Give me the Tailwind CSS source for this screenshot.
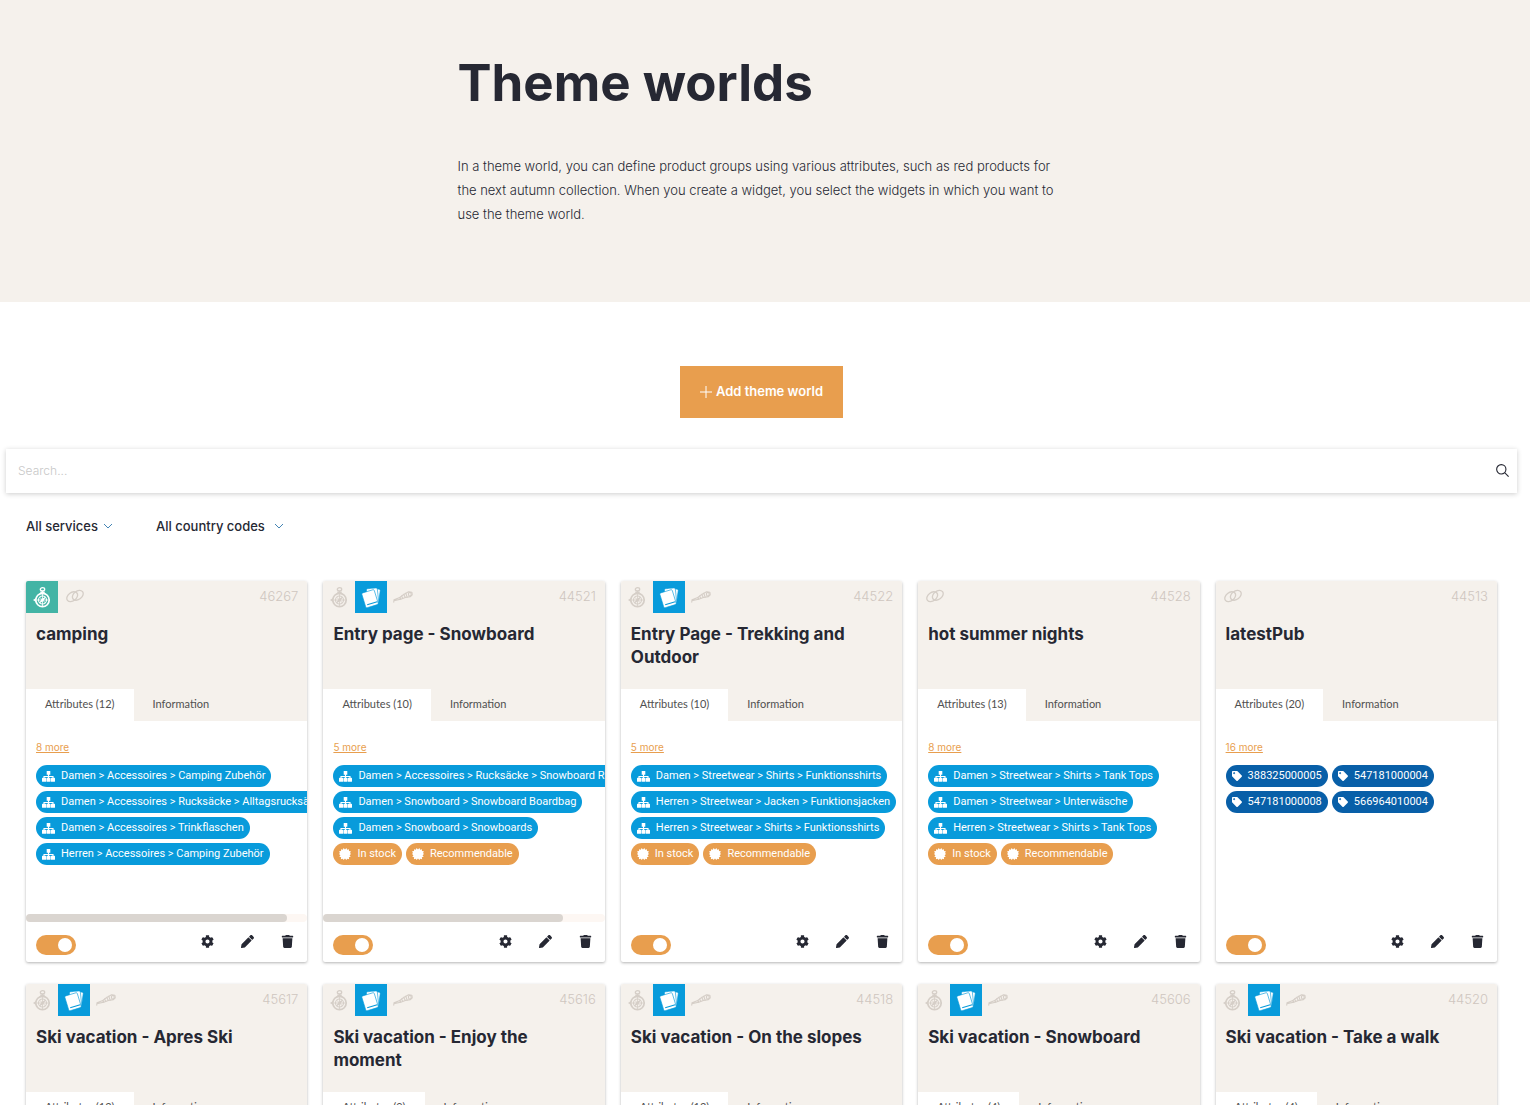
<!DOCTYPE html>
<html lang="en">
<head>
    <meta charset="UTF-8">
    <meta name="viewport" content="width=device-width, initial-scale=1.0">
    <title>Theme worlds</title>
    <script src="https://cdn.jsdelivr.net/npm/@tailwindcss/browser@4"></script>
</head>
<body class="bg-white font-['Inter',sans-serif] text-[#262833]">
    <!-- Icon sprite -->
    <svg class="hidden" aria-hidden="true">
        <symbol id="i-compass" viewBox="0 0 18 21">
            <g fill="none" stroke="currentColor">
                <circle cx="9.500" cy="13" r="6.700" stroke-width="1.700"/>
                <circle cx="9.500" cy="13" r="4" stroke-width="1.100"/>
                <path d="M9.500 7v12M3.500 13h12M6.500 10l6 6M12.500 10l-6 6" stroke-width=".8"/>
                <ellipse cx="9.500" cy="2.300" rx="2.200" ry="1.600" stroke-width="1.300"/>
                <path d="M9.500 4v2.500M7.300 5.300h4.400" stroke-width="1.500"/>
            </g>
            <path d="M0 13l3-2v4zM12.700 9.800l-2.200 4.200-4.200 2.200 2.200-4.200z" fill="currentColor"/>
        </symbol>
        <symbol id="i-cards" viewBox="0 0 20 21">
            <g fill="currentColor" stroke="#089bdb" stroke-width=".6">
                <rect x="8" y="1.500" width="10.500" height="14" rx="1.200" transform="rotate(8 13.200 8.500)"/>
                <rect x="6" y="1.300" width="11" height="14.500" rx="1.200" transform="rotate(-6 11.500 8.500)"/>
                <rect x="2.500" y="4" width="13" height="15.500" rx="1.200" transform="rotate(-17 9 11.700)"/>
            </g>
            <path d="M6.200 17.700l10-3" fill="none" stroke="#089bdb" stroke-width="1.200"/>
        </symbol>
        <symbol id="i-spyglass" viewBox="0 0 22 13">
            <g fill="none" stroke="currentColor" stroke-width="1.200" stroke-linejoin="round" stroke-linecap="round">
                <path d="M1 12l.3-2.600L7.500 7l1 2-6.200 1.200-1.200-.4"/>
                <path d="M7.500 7l4.300-3.300 1.700 3.300-5 2zM11.800 3.700L17 .900l3.600.4.400 2.800-2 2-5.500.9z"/>
                <path d="M9.500 5.500l1.200 2.600M14 2.500l1.500 4.100"/>
                <ellipse cx="18.400" cy="3.500" rx="1.500" ry="2"/>
            </g>
        </symbol>
        <symbol id="i-link" viewBox="0 0 18 14">
            <g fill="none" stroke="currentColor" stroke-width="1.300">
                <ellipse cx="6.200" cy="7.700" rx="6" ry="4.200" transform="rotate(-38 6.200 7.700)"/>
                <ellipse cx="11.800" cy="6.300" rx="6" ry="4.200" transform="rotate(-38 11.800 6.300)"/>
            </g>
        </symbol>
        <symbol id="i-sitemap" viewBox="0 0 13 11">
            <path d="M6.500 3v4M2 8V5.500h9V8" fill="none" stroke="currentColor" stroke-width="1.100"/>
            <path d="M4.700 0h3.600v3.800H4.700zM.6 6.800h2.900a.6.6 0 0 1 .6.600v2.800a.6.6 0 0 1-.6.600H.6a.6.6 0 0 1-.6-.6V7.400a.6.6 0 0 1 .6-.6zM5.100 6.800h2.800a.6.6 0 0 1 .6.600v2.800a.6.6 0 0 1-.6.600H5.100a.6.6 0 0 1-.6-.6V7.400a.6.6 0 0 1 .6-.6zM9.500 6.800h2.900a.6.6 0 0 1 .6.600v2.800a.6.6 0 0 1-.6.600H9.500a.6.6 0 0 1-.6-.6V7.400a.6.6 0 0 1 .6-.6z" fill="currentColor"/>
        </symbol>
        <symbol id="i-badge" viewBox="0 0 24 24">
            <path fill="currentColor" d="M12 2.800L14.800 0l1.500 3.600L20 2.300l-.1 3.900 3.900.4-1.700 3.500L24 12l-2.900 2.400 2.300 3.100-3.700 1 .6 3.900-3.700-1L14.800 24 12 21.200 9.200 24l-1.800-2.600-3.700 1 .6-3.900-3.700-1 2.300-3.100L0 12l1.900-1.900L.2 6.600l3.900-.4L4 2.300l3.700 1.300L9.200 0z"/>
        </symbol>
        <symbol id="i-tag" viewBox="0 0 512 512">
            <path fill="currentColor" d="M0 252.100V48C0 21.500 21.500 0 48 0h204.100a48 48 0 0 1 33.900 14.100l211.900 211.900c18.700 18.700 18.700 49.100 0 67.900L293.800 497.900c-18.700 18.700-49.100 18.700-67.900 0L14.100 286.100A48 48 0 0 1 0 252.100zM112 64c-26.500 0-48 21.500-48 48s21.500 48 48 48 48-21.500 48-48-21.500-48-48-48z"/>
        </symbol>
        <symbol id="i-gear" viewBox="0 0 512 512">
            <path fill="currentColor" d="M487.400 315.700l-42.600-24.600c4.300-23.200 4.300-47 0-70.200l42.600-24.600c4.900-2.800 7.100-8.600 5.500-14-11.100-35.600-30-67.800-54.700-94.600-3.800-4.100-10-5.100-14.800-2.300L380.800 110c-17.900-15.400-38.500-27.300-60.800-35.100V25.800c0-5.600-3.900-10.500-9.400-11.700-36.700-8.200-74.300-7.800-109.200 0-5.500 1.200-9.400 6.100-9.400 11.700V75c-22.200 7.900-42.800 19.800-60.800 35.100L88.700 85.500c-4.900-2.800-11-1.900-14.800 2.300-24.700 26.700-43.600 58.900-54.700 94.600-1.700 5.400.6 11.200 5.500 14L67.300 221c-4.300 23.200-4.300 47 0 70.200l-42.600 24.600c-4.900 2.800-7.100 8.600-5.500 14 11.100 35.600 30 67.800 54.700 94.600 3.800 4.100 10 5.100 14.800 2.300l42.600-24.600c17.900 15.400 38.500 27.300 60.800 35.100v49.200c0 5.600 3.900 10.500 9.400 11.700 36.700 8.200 74.300 7.800 109.200 0 5.500-1.200 9.400-6.100 9.400-11.700v-49.200c22.200-7.900 42.800-19.800 60.800-35.100l42.600 24.600c4.900 2.800 11 1.900 14.800-2.300 24.700-26.700 43.600-58.900 54.700-94.600 1.500-5.500-.7-11.300-5.600-14.100zM256 336c-44.100 0-80-35.900-80-80s35.900-80 80-80 80 35.900 80 80-35.900 80-80 80z"/>
        </symbol>
        <symbol id="i-pencil" viewBox="0 0 512 512">
            <path fill="currentColor" d="M497.900 142.100l-46.100 46.100c-4.700 4.700-12.300 4.700-17 0l-111-111c-4.700-4.700-4.700-12.300 0-17l46.100-46.100c18.700-18.700 49.100-18.700 67.900 0l60.100 60.100c18.800 18.700 18.800 49.100 0 67.900zM284.200 99.800L21.600 362.400.4 483.900c-2.900 16.400 11.400 30.600 27.800 27.800l121.500-21.300 262.600-262.600c4.700-4.700 4.700-12.300 0-17l-111-111c-4.800-4.700-12.400-4.700-17.100 0z"/>
        </symbol>
        <symbol id="i-trash" viewBox="0 0 448 512">
            <path fill="currentColor" d="M432 32H312l-9.400-18.700A24 24 0 0 0 281.100 0H166.800a23.700 23.700 0 0 0-21.400 13.300L136 32H16A16 16 0 0 0 0 48v32a16 16 0 0 0 16 16h416a16 16 0 0 0 16-16V48a16 16 0 0 0-16-16zM32 128l21.200 339a48 48 0 0 0 47.900 45h245.800a48 48 0 0 0 47.900-45L416 128z"/>
        </symbol>
    </svg>

    <header class="bg-[#f5f1ec] pr-[7px] pt-[50px] pb-[76px]">
        <div class="mx-auto max-w-[608px]">
            <h1 class="text-[51px] leading-[66px] font-bold">Theme worlds</h1>
            <p class="mt-[38px] text-[13px] leading-6 font-light">In a theme world, you can define product groups using various attributes, such as red products for the next autumn collection. When you create a widget, you select the widgets in which you want to use the theme world.</p>
        </div>
    </header>

    <main class="pt-16">
        <div class="flex justify-center pr-[7px]">
            <button type="button" class="flex h-[52px] items-center gap-1 bg-[#e89e4e] px-5 text-[13px] font-semibold text-white">
                <svg class="size-3" viewBox="0 0 12 12" fill="none" stroke="currentColor" aria-hidden="true"><path d="M6 0v12M0 6h12"/></svg>
                Add theme world
            </button>
        </div>

        <form class="mt-[31px] mr-[13px] ml-1.5 flex h-11 items-center bg-white shadow-[0_1px_5px_rgba(0,0,0,0.2)]">
            <input type="search" aria-label="Search" placeholder="Search..." class="h-full flex-1 px-3 pb-0.5 text-xs font-light outline-none placeholder:text-[#c8c8c8]">
            <button type="submit" aria-label="Start search" class="px-2 pb-0.5">
                <svg class="size-[13px]" viewBox="0 0 14 14" fill="none" stroke="currentColor" stroke-width="1.200" aria-hidden="true"><circle cx="5.700" cy="5.700" r="5"/><path d="M9.300 9.300l4.300 4.300"/></svg>
            </button>
        </form>

        <div class="mt-[23px] flex gap-11 pl-[26px] text-[13px] leading-5 font-medium">
            <div class="flex items-center gap-1.5">
                <select aria-label="Service" class="appearance-none"><option>All services</option></select>
                <svg class="h-1.5 w-2" viewBox="0 0 8 6" fill="none" stroke="#4384b4" aria-hidden="true"><path d="M0 1l4 4 4-4"/></svg>
            </div>
            <div class="flex items-center gap-2.5">
                <select aria-label="Country code" class="appearance-none"><option>All country codes</option></select>
                <svg class="h-1.5 w-2" viewBox="0 0 8 6" fill="none" stroke="#4384b4" aria-hidden="true"><path d="M0 1l4 4 4-4"/></svg>
            </div>
        </div>

        <section id="worlds" class="mt-[45px] grid grid-cols-5 gap-x-4 gap-y-[22px] pr-[33px] pb-8 pl-[26px]"></section>
    </main>

    <script>
        const slots = {
            compass: '<span class="flex size-8 items-center justify-center text-[#d5cec7]"><svg class="h-[21px] w-[18px]"><use href="#i-compass"/></svg></span>',
            compassOn: '<span class="flex size-8 items-center justify-center bg-[#43b4a5] text-white"><svg class="h-[21px] w-[18px]"><use href="#i-compass"/></svg></span>',
            cards: '<span class="flex size-8 items-center justify-center bg-[#089bdb] text-white"><svg class="h-[21px] w-5"><use href="#i-cards"/></svg></span>',
            spyglass: '<span class="flex size-8 items-center justify-center text-[#d5cec7]"><svg class="h-3 w-[22px]"><use href="#i-spyglass"/></svg></span>',
            link: '<span class="flex h-8 w-[34px] items-center justify-center pb-0.5 text-[#d5cec7]"><svg class="h-3.5 w-[18px]"><use href="#i-link"/></svg></span>'
        };
        const wizard = ['compass', 'cards', 'spyglass'];

        const chip = {
            path: text => `<li class="flex h-[22px] items-center gap-1.5 rounded-full bg-[#089bdb] px-1.5 whitespace-nowrap text-white"><svg class="h-[11px] w-[13px]"><use href="#i-sitemap"/></svg>${text.replaceAll('>', '&gt;')}</li>`,
            flag: text => `<li class="flex h-[22px] items-center gap-1.5 rounded-full bg-[#e89e4e] px-1.5 whitespace-nowrap text-white"><svg class="size-3"><use href="#i-badge"/></svg>${text}</li>`,
            tag: text => `<li class="flex h-[22px] items-center gap-1.5 rounded-full bg-[#085fa8] px-1.5 whitespace-nowrap text-white"><svg class="size-2.5"><use href="#i-tag"/></svg>${text}</li>`
        };
        const flags = [['flag', 'In stock'], ['flag', 'Recommendable']];

        const worlds = [
            { id: 46267, title: 'camping', count: 12, more: 8, icons: ['compassOn', 'link'], scroll: 261, rows: [
                [['path', 'Damen > Accessoires > Camping Zubehör']],
                [['path', 'Damen > Accessoires > Rucksäcke > Alltagsrucksäcke']],
                [['path', 'Damen > Accessoires > Trinkflaschen']],
                [['path', 'Herren > Accessoires > Camping Zubehör']]] },
            { id: 44521, title: 'Entry page - Snowboard', count: 10, more: 5, icons: wizard, scroll: 240, rows: [
                [['path', 'Damen > Accessoires > Rucksäcke > Snowboard Rucksäcke']],
                [['path', 'Damen > Snowboard > Snowboard Boardbag']],
                [['path', 'Damen > Snowboard > Snowboards']], flags] },
            { id: 44522, title: 'Entry Page - Trekking and Outdoor', count: 10, more: 5, icons: wizard, rows: [
                [['path', 'Damen > Streetwear > Shirts > Funktionsshirts']],
                [['path', 'Herren > Streetwear > Jacken > Funktionsjacken']],
                [['path', 'Herren > Streetwear > Shirts > Funktionsshirts']], flags] },
            { id: 44528, title: 'hot summer nights', count: 13, more: 8, icons: ['link'], rows: [
                [['path', 'Damen > Streetwear > Shirts > Tank Tops']],
                [['path', 'Damen > Streetwear > Unterwäsche']],
                [['path', 'Herren > Streetwear > Shirts > Tank Tops']], flags] },
            { id: 44513, title: 'latestPub', count: 20, more: 16, icons: ['link'], rows: [
                [['tag', '388325000005'], ['tag', '547181000004']],
                [['tag', '547181000008'], ['tag', '566964010004']]] },
            { id: 45617, title: 'Ski vacation - Apres Ski', count: 12, icons: wizard, rows: [] },
            { id: 45616, title: 'Ski vacation - Enjoy the moment', count: 9, icons: wizard, rows: [] },
            { id: 44518, title: 'Ski vacation - On the slopes', count: 12, icons: wizard, rows: [] },
            { id: 45606, title: 'Ski vacation - Snowboard', count: 4, icons: wizard, rows: [] },
            { id: 44520, title: 'Ski vacation - Take a walk', count: 4, icons: wizard, rows: [] }
        ];

        document.getElementById('worlds').innerHTML = worlds.map(w => `
            <article class="flex min-w-0 flex-col overflow-hidden rounded-xs bg-white shadow-[0_1px_3px_rgba(0,0,0,0.3)]">
                <div class="bg-[#f5f1ec]">
                    <div class="flex h-8 items-center">
                        ${w.icons.map(i => slots[i]).join('')}
                        <span class="ml-auto pr-[9px] text-[13px] font-light text-[#cfc6bf]">${w.id}</span>
                    </div>
                    <h2 class="h-[76px] px-2.5 pt-2.5 text-[17px] leading-[23px] font-bold">${w.title}</h2>
                    <div class="flex h-8 font-['Lato',sans-serif] text-[11px] text-[#505050]" role="tablist">
                        <button type="button" role="tab" aria-selected="true" class="bg-white px-[19px] pb-0.5">Attributes (${w.count})</button>
                        <button type="button" role="tab" aria-selected="false" class="px-[19px] pb-0.5">Information</button>
                    </div>
                </div>
                <div class="h-[193px] px-2.5 pt-[19px]">
                    ${w.more ? `<a href="#" class="block text-[10px] leading-[14px] text-[#e89e4e] underline">${w.more} more</a>` : ''}
                    <div class="mt-[11px] flex flex-col gap-1 font-['Roboto',sans-serif] text-[11px]">
                        ${w.rows.map(r => `<ul class="flex gap-1">${r.map(([kind, text]) => chip[kind](text)).join('')}</ul>`).join('')}
                    </div>
                </div>
                <div class="h-2 rounded-full ${w.scroll ? 'bg-[#fdf7f3]' : ''}">
                    ${w.scroll ? `<div class="h-2 rounded-full bg-[#dad5d0]" style="width: ${w.scroll}px"></div>` : ''}
                </div>
                <div class="flex h-10 items-start pr-[13px] pl-2.5">
                    <input type="checkbox" checked aria-label="${w.title} active" class="mt-[13px] h-5 w-10 appearance-none rounded-full bg-[#ccc] p-[3px] before:block before:size-3.5 before:rounded-full before:bg-white before:content-[''] checked:bg-[#e89e4e] checked:before:ml-[19px]">
                    <div class="mt-[13px] ml-auto flex gap-[27px]">
                        <button type="button" aria-label="Settings"><svg class="size-[13px]"><use href="#i-gear"/></svg></button>
                        <button type="button" aria-label="Edit"><svg class="size-[13px]"><use href="#i-pencil"/></svg></button>
                        <button type="button" aria-label="Delete"><svg class="size-[13px]"><use href="#i-trash"/></svg></button>
                    </div>
                </div>
            </article>`).join('');
    </script>
</body>
</html>
